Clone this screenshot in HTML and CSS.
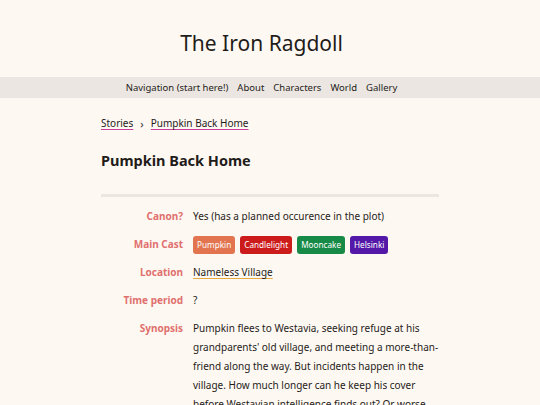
FILE: index.html
```html
<!DOCTYPE html>
<html>
<head>
<meta charset="utf-8">
<link rel="stylesheet" href="styles.css">
</head>
<body>
<header class="site-header">
  <h1 class="site-title">The Iron Ragdoll</h1>
</header>
<nav class="site-nav">
  <a href="#">Navigation (start here!)</a>
  <a href="#">About</a>
  <a href="#">Characters</a>
  <a href="#">World</a>
  <a href="#">Gallery</a>
</nav>
<main class="content">
  <div class="breadcrumb">
    <a href="#">Stories</a>
    <span class="sep">›</span>
    <a href="#">Pumpkin Back Home</a>
  </div>
  <h2 class="page-title">Pumpkin Back Home</h2>
  <hr class="divider">
  <dl class="info">
    <dt>Canon?</dt>
    <dd>Yes (has a planned occurence in the plot)</dd>
    <dt>Main Cast</dt>
    <dd class="tags">
      <span class="tag pumpkin">Pumpkin</span>
      <span class="tag candlelight">Candlelight</span>
      <span class="tag mooncake">Mooncake</span>
      <span class="tag helsinki">Helsinki</span>
    </dd>
    <dt>Location</dt>
    <dd><a class="loc" href="#">Nameless Village</a></dd>
    <dt>Time period</dt>
    <dd>?</dd>
    <dt>Synopsis</dt>
    <dd class="synopsis">Pumpkin flees to Westavia, seeking refuge at his grandparents' old village, and meeting a more-than-friend along the way. But incidents happen in the village. How much longer can he keep his cover before Westavian intelligence finds out? Or worse, his own people?</dd>
  </dl>
</main>
</body>
</html>
```
FILE: styles.css
```css
html, body {
  margin: 0;
  padding: 0;
  background: #fef8f2;
  color: #1f1c1a;
  font-family: "Noto Sans", "DejaVu Sans", sans-serif;
}
a { color: inherit; text-decoration: none; }
.site-header {
  height: 77px;
  display: flex;
  align-items: center;
  justify-content: center;
  padding-right: 17px;
}
.site-title {
  margin: 0;
  padding-top: 9px;
  font-size: 21px;
  font-weight: 400;
}
.site-nav {
  background: #ebe6e1;
  height: 21px;
  display: flex;
  justify-content: center;
  align-items: center;
  gap: 9px;
  font-size: 9.5px;
  padding-right: 17px;
}
.content {
  width: 338px;
  margin: 0 auto;
  padding-top: 16px;
}
.breadcrumb {
  font-size: 10px;
  display: flex;
  align-items: center;
  gap: 7px;
  height: 18px;
}
.breadcrumb a {
  text-decoration: underline;
  text-decoration-color: #c8409c;
  text-underline-offset: 2px;
}
.breadcrumb .sep { font-size: 11px; color: #333; }
.page-title {
  margin: 18px 0 0;
  font-size: 14.5px;
  font-weight: 700;
  height: 22px;
}
.divider {
  border: 0;
  height: 3px;
  background: #ebe6e1;
  margin: 22px 0 0;
}
.info {
  display: grid;
  grid-template-columns: 82px 1fr;
  column-gap: 10px;
  row-gap: 9px;
  margin: 10px 0 0;
  font-size: 10px;
  line-height: 19px;
}
.info dt {
  text-align: right;
  font-weight: 700;
  color: #e0706e;
}
.info dd { margin: 0; }
.tags { display: flex; gap: 5px; align-items: center; }
.tag {
  color: #fff;
  font-size: 8.2px;
  line-height: 18px;
  padding: 0 4px;
  border-radius: 3px;
}
.pumpkin { background: #e2754f; }
.candlelight { background: #cc1b1b; }
.mooncake { background: #178a47; }
.helsinki { background: #5318a8; }
.loc {
  text-decoration: underline;
  text-decoration-color: #e8a840;
  text-underline-offset: 2px;
}
```
